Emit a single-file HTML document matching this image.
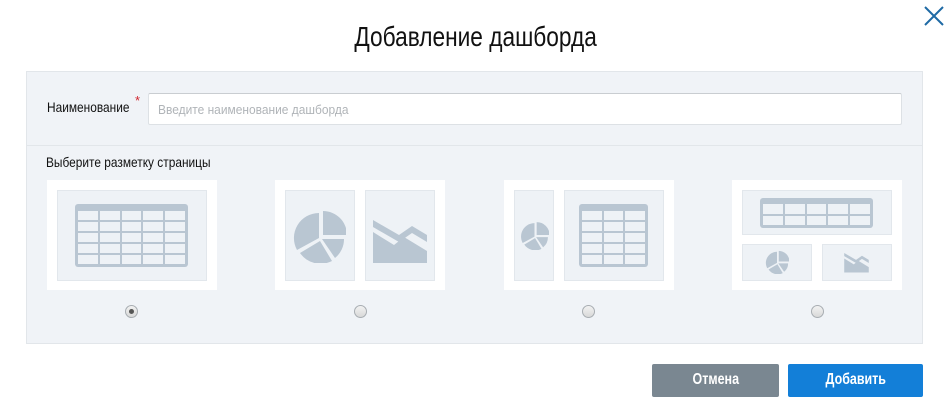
<!DOCTYPE html>
<html><head><meta charset="utf-8">
<style>
*{box-sizing:border-box;margin:0;padding:0}
body{width:951px;height:412px;background:#fff;font-family:"Liberation Sans",sans-serif;position:relative;overflow:hidden}
.a{position:absolute}
.title{left:0;width:951px;top:21px;text-align:center;font-size:28px;color:#111}
.title span{display:inline-block;transform:scaleX(0.81)}
.panel{left:26px;top:71px;width:897px;height:273px;background:#f0f3f7;border:1px solid #e2e6ea}
.div{left:27px;top:145px;width:895px;height:1px;background:#e2e6ea}
.lbl{font-size:14px;color:#111;white-space:nowrap}
.lbl span{display:inline-block;transform:scaleX(0.85);transform-origin:left}
.input{left:148px;top:93px;width:754px;height:32px;background:#fff;border:1px solid #dde1e5;border-top-color:#c9cdd1;border-radius:2px;font-size:13px;color:#b0b4b8;padding:8px 0 0 9px;white-space:nowrap}
.input span{display:inline-block;transform:scaleX(0.92);transform-origin:left}
.card{background:#fff;width:170px;height:110px;top:180px}
.in{background:#eef2f6;border:1px solid #e2e7ec}
.tbl{background:#b9c6d2;border-radius:3px;display:grid;gap:2px}
.tbl i{background:#eef2f6;display:block}
.radio{width:13px;height:13px;border-radius:50%;border:1px solid #a8adb2;background:linear-gradient(#f2f2f2,#d8d8d8);top:305px}
.radio.on::after{content:"";position:absolute;left:3px;top:3px;width:5px;height:5px;border-radius:50%;background:#555}
.btn{top:364px;height:33px;border-radius:2px;color:#fff;font-size:16px;font-weight:bold;text-align:center;padding-top:7px}
.btn span{display:inline-block;transform:scaleX(0.78)}
</style></head><body>
<svg width="0" height="0" style="position:absolute">
<symbol id="pie" viewBox="0 0 54 54">
<path d="M31 2 A24 24 0 0 1 55 26 L31 26 Z" fill="#b9c6d2"/>
<path d="M27 29 L27 4 A25 25 0 0 0 5 41 Z" fill="#b9c6d2"/>
<path d="M28 32 L8 44 A25 25 0 0 0 40 52 Z" fill="#b9c6d2"/>
<path d="M30 30 L52 30 A24 24 0 0 1 43 49 Z" fill="#b9c6d2"/>
</symbol>
<symbol id="area" viewBox="0 0 54 44">
<path d="M0 0 L26 15 L39 6 L54 15 L54 22 L39 13 L26 22 L0 7 Z" fill="#b9c6d2"/>
<path d="M0 12 L21 25 L31 17 L54 31 L54 43 L0 43 Z" fill="#b9c6d2"/>
</symbol>
</svg>

<div class="a title"><span>Добавление дашборда</span></div>
<svg class="a" style="left:922px;top:4px" width="24" height="24" viewBox="0 0 24 24"><path d="M3 3 L21 21 M21 3 L3 21" stroke="#1f6aa5" stroke-width="2" fill="none"/></svg>

<div class="a panel"></div>
<div class="a div"></div>
<div class="a lbl" style="left:47px;top:99px"><span>Наименование</span></div>
<div class="a" style="left:135px;top:93px;color:#d0262f;font-size:13px">*</div>
<div class="a input"><span>Введите наименование дашборда</span></div>
<div class="a lbl" style="left:46px;top:154px"><span>Выберите разметку страницы</span></div>

<div class="a card" style="left:47px"></div>
<div class="a in" style="left:57px;top:190px;width:150px;height:91px"></div>
<div class="a tbl" style="left:75px;top:204px;width:113px;height:63px;grid-template-columns:repeat(5,1fr);grid-template-rows:repeat(5,1fr);padding:7px 3px 3px 3px"><i></i><i></i><i></i><i></i><i></i><i></i><i></i><i></i><i></i><i></i><i></i><i></i><i></i><i></i><i></i><i></i><i></i><i></i><i></i><i></i><i></i><i></i><i></i><i></i><i></i></div>

<div class="a card" style="left:275px"></div>
<div class="a in" style="left:285px;top:190px;width:70px;height:91px"></div>
<div class="a in" style="left:365px;top:190px;width:70px;height:91px"></div>
<svg class="a" style="left:292px;top:209px" width="54" height="54"><use href="#pie"/></svg>
<svg class="a" style="left:373px;top:220px" width="54" height="44"><use href="#area"/></svg>

<div class="a card" style="left:504px"></div>
<div class="a in" style="left:514px;top:190px;width:40px;height:91px"></div>
<div class="a in" style="left:564px;top:190px;width:100px;height:91px"></div>
<svg class="a" style="left:520px;top:221px" width="29" height="29"><use href="#pie"/></svg>
<div class="a tbl" style="left:579px;top:204px;width:69px;height:63px;grid-template-columns:repeat(3,1fr);grid-template-rows:repeat(5,1fr);padding:7px 3px 3px 3px"><i></i><i></i><i></i><i></i><i></i><i></i><i></i><i></i><i></i><i></i><i></i><i></i><i></i><i></i><i></i></div>

<div class="a card" style="left:732px"></div>
<div class="a in" style="left:742px;top:190px;width:150px;height:45px"></div>
<div class="a in" style="left:742px;top:244px;width:70px;height:37px"></div>
<div class="a in" style="left:822px;top:244px;width:70px;height:37px"></div>
<div class="a tbl" style="left:760px;top:198px;width:113px;height:30px;grid-template-columns:repeat(5,1fr);grid-template-rows:repeat(2,1fr);padding:6px 3px 3px 3px"><i></i><i></i><i></i><i></i><i></i><i></i><i></i><i></i><i></i><i></i></div>
<svg class="a" style="left:765px;top:250px" width="24" height="24"><use href="#pie"/></svg>
<svg class="a" style="left:844px;top:253px" width="25" height="20"><use href="#area"/></svg>

<div class="a radio on" style="left:125px"></div>
<div class="a radio" style="left:354px"></div>
<div class="a radio" style="left:582px"></div>
<div class="a radio" style="left:811px"></div>

<div class="a btn" style="left:652px;width:127px;background:#7a8791"><span>Отмена</span></div>
<div class="a btn" style="left:788px;width:135px;background:#137fd8"><span>Добавить</span></div>
</body></html>
